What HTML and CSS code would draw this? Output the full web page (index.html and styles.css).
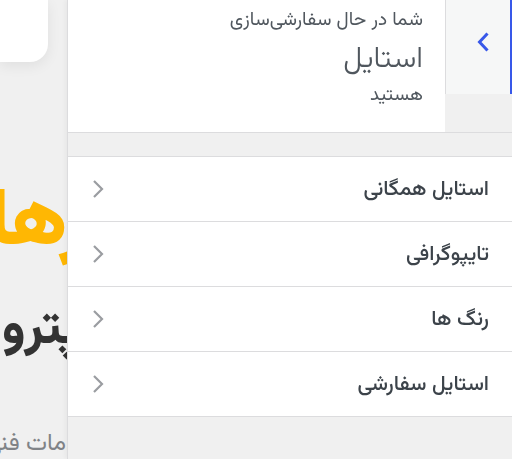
FILE: index.html
```html
<!DOCTYPE html>
<html lang="fa">
<head>
<meta charset="utf-8">
<title>Customizer</title>
<link rel="stylesheet" href="styles.css">
</head>
<body>
<main class="preview" dir="rtl">
  <div class="card"></div>
  <h1 class="hero">نمونه‌کارها</h1>
  <h2 class="title">خدمات پترو</h2>
  <p class="desc">پشتیبانی و خدمات فنی</p>
</main>
<aside class="panel" dir="rtl">
  <header class="panel-head">
    <button class="back" type="button" aria-label="بازگشت">
      <svg width="16" height="24" viewBox="0 0 16 24"><polyline points="12.5,3.5 4.5,12 12.5,20.5" fill="none" stroke="#3858e9" stroke-width="3"/></svg>
    </button>
    <div class="head-text">
      <span class="pre">شما در حال سفارشی‌سازی</span>
      <span class="name">استایل</span>
      <span class="post">هستید</span>
    </div>
  </header>
  <ul class="sections">
    <li class="section"><span class="label">استایل همگانی</span><svg class="chev" width="12" height="20" viewBox="0 0 12 20"><polyline points="2,2 10,10 2,18" fill="none" stroke="#9a9da1" stroke-width="2.2"/></svg></li>
    <li class="section"><span class="label">تایپوگرافی</span><svg class="chev" width="12" height="20" viewBox="0 0 12 20"><polyline points="2,2 10,10 2,18" fill="none" stroke="#9a9da1" stroke-width="2.2"/></svg></li>
    <li class="section"><span class="label">رنگ ها</span><svg class="chev" width="12" height="20" viewBox="0 0 12 20"><polyline points="2,2 10,10 2,18" fill="none" stroke="#9a9da1" stroke-width="2.2"/></svg></li>
    <li class="section"><span class="label">استایل سفارشی</span><svg class="chev" width="12" height="20" viewBox="0 0 12 20"><polyline points="2,2 10,10 2,18" fill="none" stroke="#9a9da1" stroke-width="2.2"/></svg></li>
  </ul>
</aside>
</body>
</html>
```

FILE: styles.css
```css
html, body {
  margin: 0;
  padding: 0;
  height: 100%;
}
body {
  background: #f0f0f0;
  font-family: "Vazirmatn", "Noto Sans Arabic", "DejaVu Sans", sans-serif;
  overflow: hidden;
}
.preview {
  width: 512px;
  height: 459px;
  overflow: hidden;
  background: #f0f0f0;
  display: flex;
  flex-direction: column;
  align-items: flex-end;
}
.card {
  width: 48px;
  height: 62px;
  background: #fff;
  border-bottom-right-radius: 18px;
  box-shadow: 0 4px 14px rgba(0,0,0,0.07);
}
.hero {
  margin: 113px 0 0;
  margin-left: -12px;
  font-size: 80px;
  font-weight: 900;
  color: #ffb703;
  line-height: 100px;
  white-space: nowrap;
}
.title {
  margin: 24px 0 0;
  margin-left: 2px;
  font-size: 50px;
  font-weight: 800;
  color: #333;
  line-height: 64px;
  white-space: nowrap;
}
.desc {
  margin: 66px 0 0;
  margin-left: -15px;
  font-size: 24px;
  color: #808387;
  line-height: 30px;
  white-space: nowrap;
}
.panel {
  position: fixed;
  top: 0;
  right: 0;
  width: 444px;
  height: 459px;
  background: #f0f0f0;
  border-left: 1px solid #dcdcde;
  box-shadow: -2px 0 4px rgba(0,0,0,0.04);
}
.panel-head {
  display: flex;
  align-items: flex-start;
  height: 132px;
  border-bottom: 1px solid #dcdcde;
}
.back {
  width: 67px;
  height: 94px;
  flex: none;
  margin: 0;
  padding: 0 0 10px 10px;
  background: #f6f7f7;
  border: 0;
  border-left: 1px solid #dcdcde;
  border-right: 2px solid #3858e9;
  display: flex;
  align-items: center;
  justify-content: center;
}
.head-text {
  flex: 1;
  height: 132px;
  background: #fff;
  box-sizing: border-box;
  padding: 7px 22px 0 0;
  display: flex;
  flex-direction: column;
  align-items: flex-start;
  color: #50575e;
}
.pre {
  font-size: 19px;
  line-height: 28px;
}
.name {
  font-size: 30px;
  font-weight: 300;
  line-height: 40px;
  margin-top: 5px;
}
.post {
  font-size: 19px;
  line-height: 28px;
  margin-top: 2px;
}
.sections {
  list-style: none;
  margin: 23px 0 0;
  padding: 0;
  border-top: 1px solid #dcdcde;
}
.section {
  height: 64px;
  background: #fff;
  border-bottom: 1px solid #dcdcde;
  display: flex;
  align-items: center;
  justify-content: space-between;
  padding: 0 23px 0 24px;
}
.label {
  font-size: 21px;
  font-weight: 500;
  color: #3c434a;
}
.chev {
  display: block;
}
```
